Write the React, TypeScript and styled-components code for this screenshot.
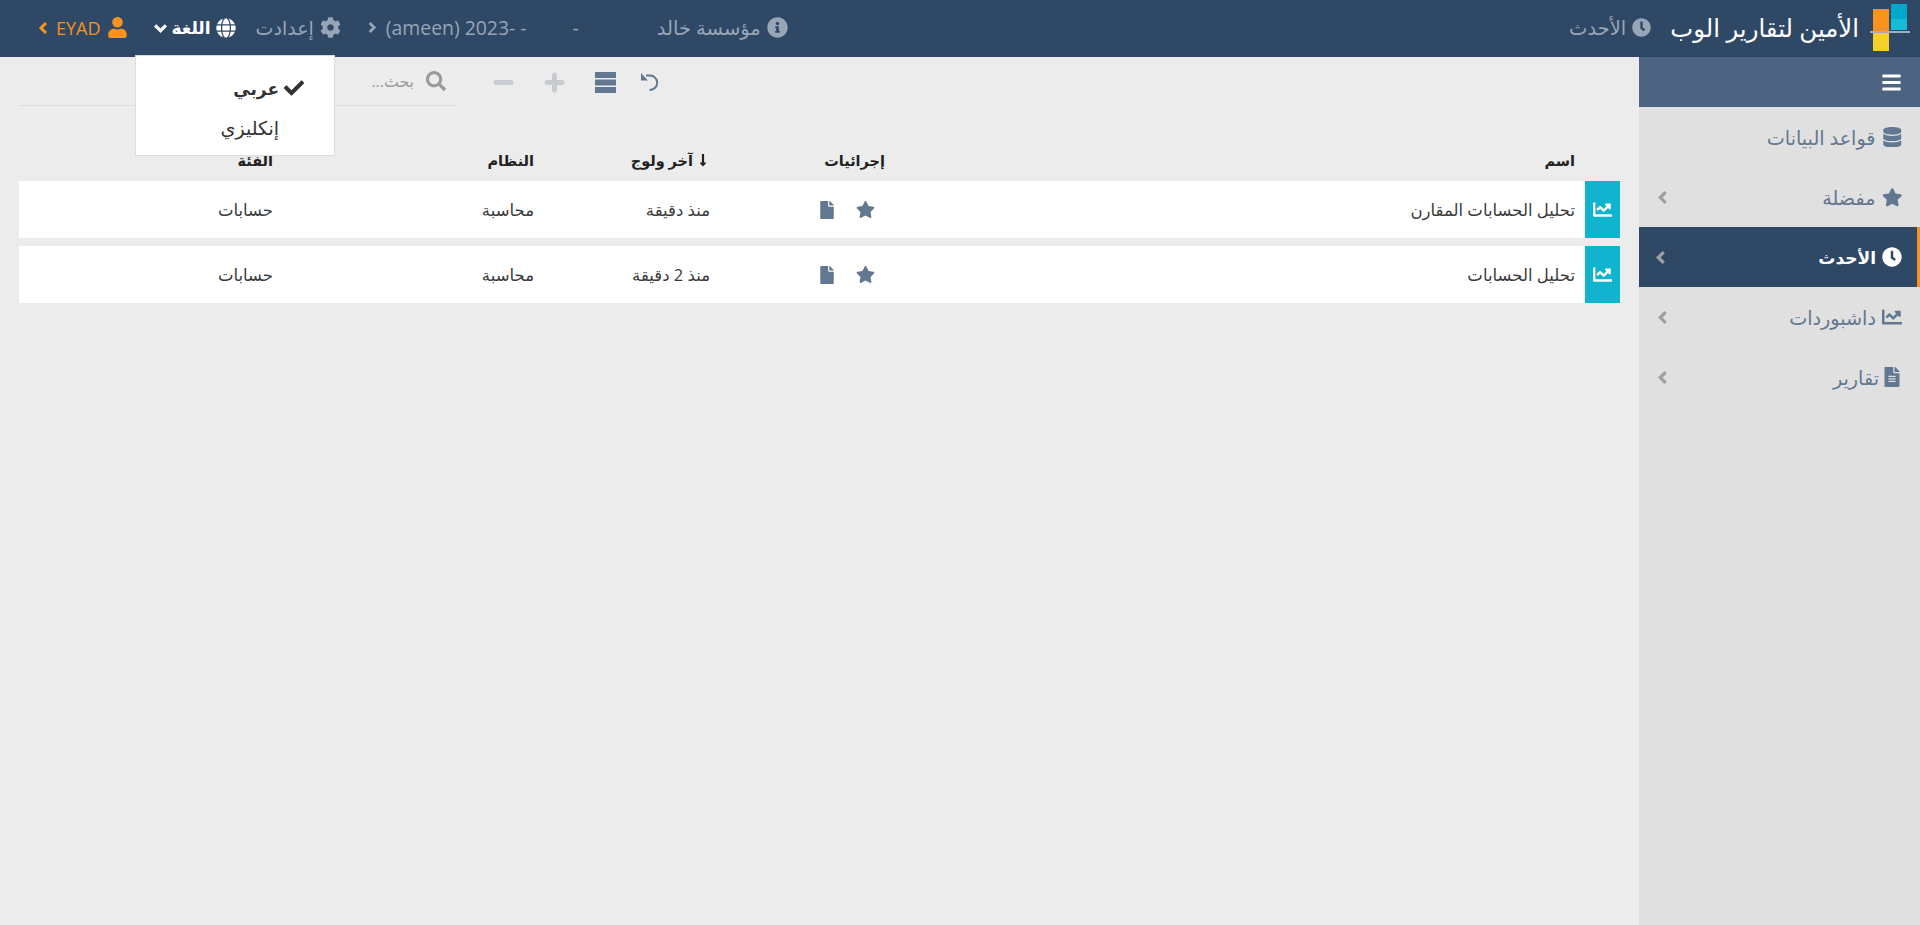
import styled, { createGlobalStyle } from 'styled-components';
import {
  FaBars,
  FaChartLine,
  FaCheck,
  FaClock,
  FaCog,
  FaDatabase,
  FaFile,
  FaFileAlt,
  FaGlobe,
  FaInfoCircle,
  FaLongArrowAltDown,
  FaSearch,
  FaStar,
  FaUser,
} from 'react-icons/fa';

const GlobalStyle = createGlobalStyle`
  html, body {
    margin: 0;
    height: 100%;
    overflow: hidden;
  }
  body {
    background: #ececec;
    font-family: "Open Sans", "DejaVu Sans", sans-serif;
    color: #333;
  }
`;

const Page = styled.div`
  direction: rtl;
  height: 925px;
  display: flex;
  flex-direction: column;
  position: relative;
`;

const TopBar = styled.header`
  height: 57px;
  box-sizing: border-box;
  flex: none;
  background: #2f4866;
  display: flex;
  align-items: center;
  padding: 0 10px 2px 0;
`;

const Logo = styled.svg`
  width: 40px;
  height: 48px;
  flex: none;
`;

const Brand = styled.div`
  color: #fff;
  font-size: 24.4px;
  margin-right: 11px;
  white-space: nowrap;
`;

const TopLink = styled.a<{ $color?: string; $gap?: number; $size?: number }>`
  display: flex;
  align-items: center;
  gap: ${(p) => p.$gap ?? 6}px;
  color: ${(p) => p.$color ?? '#98a5b6'};
  font-size: ${(p) => p.$size ?? 19.5}px;
  white-space: nowrap;
  svg {
    flex: none;
    width: auto;
  }
`;

const RecentLink = styled(TopLink)`
  margin-right: 19px;
`;

const TopNav = styled.nav`
  margin-right: auto;
  padding-left: 38px;
  display: flex;
  align-items: center;
`;

const NavGroup = styled.div<{ $after: number }>`
  margin-left: ${(p) => p.$after}px;
`;

const LatinGroup = styled.bdi`
  direction: ltr;
  font-size: 19.4px;
  margin-left: 3px;
`;

const Dash = styled.span`
  margin: 0 72px 0 40px;
`;

const Chevron = ({ dir, size = 12 }: { dir: 'left' | 'right' | 'down'; size?: number }) => {
  const points = { left: '8,1 3,6 8,11', right: '4,1 9,6 4,11', down: '1,4 6,9 11,4' }[dir];
  return (
    <svg width={size} height={size} viewBox="0 0 12 12" fill="none" stroke="currentColor" strokeWidth="3">
      <polyline points={points} />
    </svg>
  );
};

const LangMenu = styled.div`
  position: absolute;
  left: 135px;
  top: 55px;
  width: 200px;
  height: 101px;
  box-sizing: border-box;
  background: #fff;
  border: 1px solid #ddd;
  z-index: 5;
  padding: 12px 30px 0 0;
`;

const LangItem = styled.div<{ $active?: boolean }>`
  height: 40px;
  display: flex;
  align-items: center;
  gap: 5px;
  font-size: ${(p) => (p.$active ? 17 : 19)}px;
  font-weight: ${(p) => (p.$active ? 700 : 400)};
  color: #333;
  padding-right: ${(p) => (p.$active ? 0 : 25)}px;
`;

const Body = styled.div`
  flex: 1;
  display: flex;
  min-height: 0;
`;

const Sidebar = styled.aside`
  width: 281px;
  flex: none;
  background: #e0e0e0;
`;

const MenuToggle = styled.div`
  height: 50px;
  background: #4c6482;
  color: #fff;
  display: flex;
  align-items: center;
  padding-right: 18px;
`;

const MenuItem = styled.div<{ $active?: boolean; $gap?: number }>`
  height: 60px;
  box-sizing: border-box;
  display: flex;
  align-items: center;
  gap: ${(p) => p.$gap ?? 6}px;
  padding: 0 15px 0 18px;
  font-size: ${(p) => (p.$active ? 17 : 19.2)}px;
  color: ${(p) => (p.$active ? '#fff' : '#627890')};
  background: ${(p) => (p.$active ? '#2f4866' : 'transparent')};
  border-right: 3px solid ${(p) => (p.$active ? '#f7931e' : 'transparent')};
  font-weight: ${(p) => (p.$active ? 700 : 400)};
  svg {
    width: auto;
    flex: none;
  }
`;

const MenuArrow = styled.span<{ $active?: boolean }>`
  margin-right: auto;
  margin-left: ${(p) => (p.$active ? -2 : 0)}px;
  display: inline-flex;
  color: #a0a0a0;
`;

const Content = styled.main`
  flex: 1;
  min-width: 0;
  padding: 0 19px;
`;

const ToolRow = styled.div`
  height: 49px;
  display: flex;
  justify-content: flex-end;
  align-items: center;
  gap: 37px;
`;

const Toolbar = styled.div`
  display: flex;
  align-items: center;
  gap: 30px;
  padding-top: 1px;
`;

const ToolIcon = styled.span<{ $muted?: boolean }>`
  display: inline-flex;
  color: ${(p) => (p.$muted ? '#c8ccd2' : '#627890')};
`;

const UndoIcon = styled(ToolIcon)`
  margin-left: -6px;
`;

const SearchBox = styled.div`
  width: 437px;
  height: 49px;
  box-sizing: border-box;
  border-bottom: 1px solid #ddd;
  display: flex;
  align-items: center;
  gap: 12px;
  padding: 0 10px 0 0;
  color: #9a9a9a;
  font-size: 15.8px;
`;

const Row = styled.div<{ $head?: boolean }>`
  display: grid;
  grid-template-columns: 35px 690px 175px 176px 261px 1fr;
  align-items: center;
  height: ${(p) => (p.$head ? 'auto' : '57px')};
  background: ${(p) => (p.$head ? 'transparent' : '#fff')};
  font-size: ${(p) => (p.$head ? 14.5 : 16.5)}px;
  font-weight: ${(p) => (p.$head ? 700 : 400)};
  color: ${(p) => (p.$head ? '#222' : '#3a3a3a')};
  margin-bottom: ${(p) => (p.$head ? 11 : 8)}px;
`;

const HeadRow = styled(Row)`
  margin-top: 44px;
  height: 20px;
`;

const Cell = styled.div`
  padding-right: 10px;
  display: flex;
  align-items: center;
  gap: 3px;
  white-space: nowrap;
`;

const Strip = styled.div`
  height: 100%;
  background: #10b4ce;
  color: #fff;
  display: flex;
  align-items: center;
  justify-content: center;
`;

const Actions = styled(Cell)`
  color: #627890;
  gap: 20px;
  padding-right: 20px;
`;

const recents = [
  { name: 'تحليل الحسابات المقارن', last: 'منذ دقيقة' },
  { name: 'تحليل الحسابات', last: 'منذ 2 دقيقة' },
];

const menu = [
  { label: 'مفضلة', Icon: FaStar, size: 20.5 },
  { label: 'الأحدث', Icon: FaClock, size: 20, active: true },
  { label: 'داشبوردات', Icon: FaChartLine, size: 20 },
  { label: 'تقارير', Icon: FaFileAlt, size: 20, gap: 3 },
];

const App = () => {
  return (
    <Page>
      <GlobalStyle />
      <TopBar>
        <Logo viewBox="0 0 40 48" aria-hidden="true">
          <rect x="3" y="5" width="16" height="22" fill="#f7931e" />
          <rect x="3" y="29" width="16" height="18" fill="#f9cf2e" />
          <rect x="21" y="0" width="16" height="15" fill="#00a9cc" />
          <rect x="21" y="15" width="16" height="11" fill="#16bcd4" />
          <rect x="0" y="27" width="40" height="2" fill="#a5adb6" />
        </Logo>
        <Brand>الأمين لتقارير الوب</Brand>
        <RecentLink>
          <FaClock size={19} />
          الأحدث
        </RecentLink>
        <TopNav>
          <NavGroup $after={25}>
            <TopLink>
              <FaInfoCircle size={21} />
              مؤسسة خالد
              <Dash>-</Dash>
              <LatinGroup>(ameen) 2023- -</LatinGroup>
              <Chevron dir="right" size={11} />
            </TopLink>
          </NavGroup>
          <NavGroup $after={20}>
            <TopLink $size={19}>
              <FaCog size={21} />
              إعدادت
            </TopLink>
          </NavGroup>
          <NavGroup $after={26}>
            <TopLink $color="#fff" $size={17} $gap={5}>
              <FaGlobe size={20} />
              <b>اللغة</b>
              <Chevron dir="down" size={13} />
            </TopLink>
          </NavGroup>
          <TopLink $color="#f7931e" $size={18}>
            <FaUser size={21} />
            EYAD
            <Chevron dir="left" size={12} />
          </TopLink>
        </TopNav>
      </TopBar>
      <LangMenu>
        <LangItem $active>
          <FaCheck size={20} />
          عربي
        </LangItem>
        <LangItem>إنكليزي</LangItem>
      </LangMenu>
      <Body>
        <Sidebar>
          <MenuToggle>
            <FaBars size={21} />
          </MenuToggle>
          <MenuItem>
            <FaDatabase size={20.5} />
            قواعد البيانات
          </MenuItem>
          {menu.map(({ label, Icon, size, active, gap }) => (
            <MenuItem key={label} $active={active} $gap={gap}>
              <Icon size={size} />
              {label}
              <MenuArrow $active={active}>
                <Chevron dir="left" size={13} />
              </MenuArrow>
            </MenuItem>
          ))}
        </Sidebar>
        <Content>
          <ToolRow>
            <Toolbar>
              <UndoIcon>
                <svg width="20" height="20" viewBox="0 0 20 20" fill="none" stroke="currentColor" strokeWidth="2">
                  <path d="M6 3.5 h4 a7.2 7.2 0 0 1 0 14.4 H9.5" />
                  <path d="M1 1 L1 8.5 L8 8.5 Z" fill="currentColor" stroke="none" />
                </svg>
              </UndoIcon>
              <ToolIcon>
                <svg width="21" height="21" viewBox="0 0 21 21" fill="currentColor">
                  <rect y="0" width="21" height="6" />
                  <rect y="7.5" width="21" height="6" />
                  <rect y="15" width="21" height="6" />
                </svg>
              </ToolIcon>
              <ToolIcon $muted>
                <svg width="21" height="21" viewBox="0 0 21 21" fill="none" stroke="currentColor" strokeWidth="5" strokeLinecap="round">
                  <path d="M10.5 3 V18 M3 10.5 H18" />
                </svg>
              </ToolIcon>
              <ToolIcon $muted>
                <svg width="21" height="21" viewBox="0 0 21 21" fill="none" stroke="currentColor" strokeWidth="5" strokeLinecap="round">
                  <path d="M3 10.5 H18" />
                </svg>
              </ToolIcon>
            </Toolbar>
            <SearchBox>
              <FaSearch size={20} />
              بحث...
            </SearchBox>
          </ToolRow>
          <HeadRow $head>
            <span />
            <Cell>اسم</Cell>
            <Cell>إجرائيات</Cell>
            <Cell>
              <FaLongArrowAltDown size={14} />
              آخر ولوج
            </Cell>
            <Cell>النظام</Cell>
            <Cell>الفئة</Cell>
          </HeadRow>
          {recents.map((r) => (
            <Row key={r.name}>
              <Strip>
                <FaChartLine size={19} />
              </Strip>
              <Cell>{r.name}</Cell>
              <Actions>
                <FaStar size={19} />
                <FaFile size={18} />
              </Actions>
              <Cell>{r.last}</Cell>
              <Cell>محاسبة</Cell>
              <Cell>حسابات</Cell>
            </Row>
          ))}
        </Content>
      </Body>
    </Page>
  );
};

export default App;
